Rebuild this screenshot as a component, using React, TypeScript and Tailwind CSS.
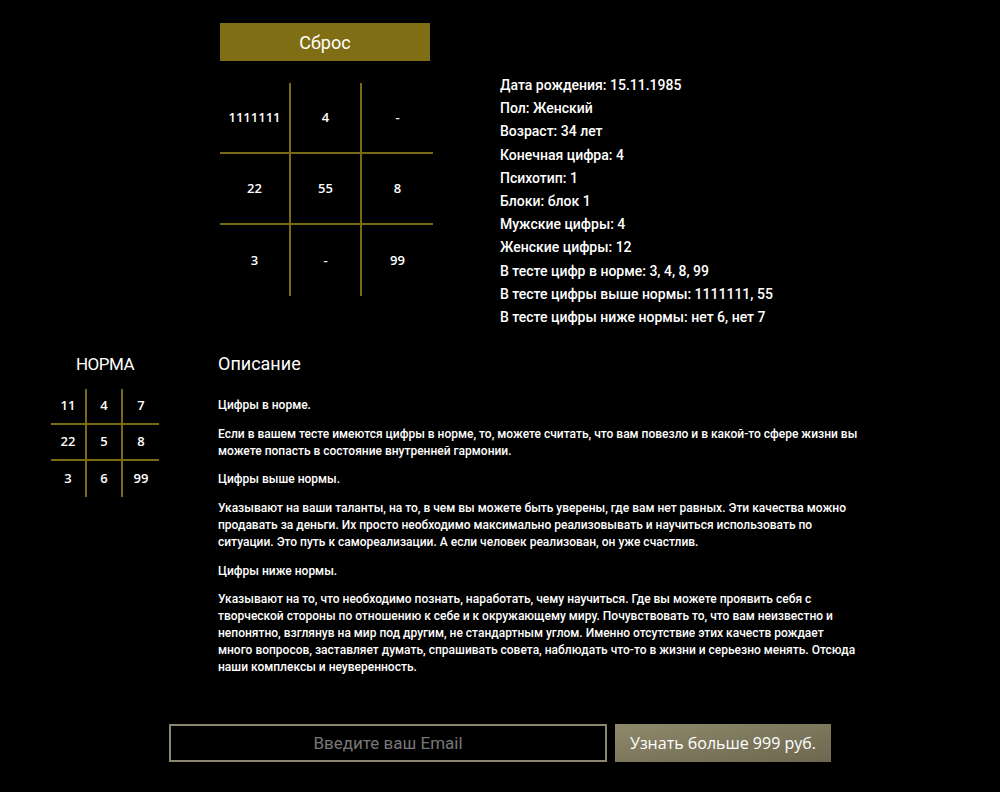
const mainGrid = [
  ["1111111", "4", "-"],
  ["22", "55", "8"],
  ["3", "-", "99"],
];

const normGrid = [
  ["11", "4", "7"],
  ["22", "5", "8"],
  ["3", "6", "99"],
];

const info = [
  "Дата рождения: 15.11.1985",
  "Пол: Женский",
  "Возраст: 34 лет",
  "Конечная цифра: 4",
  "Психотип: 1",
  "Блоки: блок 1",
  "Мужские цифры: 4",
  "Женские цифры: 12",
  "В тесте цифр в норме: 3, 4, 8, 99",
  "В тесте цифры выше нормы: 1111111, 55",
  "В тесте цифры ниже нормы: нет 6, нет 7",
];

const Matrix = ({ rows, cell }: { rows: string[][]; cell: string }) => (
  <div className="grid grid-cols-3">
    {rows.map((row, r) =>
      row.map((v, c) => (
        <div
          key={`${r}-${c}`}
          className={`${cell} flex items-center justify-center border-[#7a6a14] ${
            c < 2 ? "border-r-2" : ""
          } ${r < 2 ? "border-b-2" : ""}`}>
          {v}
        </div>
      ))
    )}
  </div>
);

const App = () => {
  return (
    <div className="min-h-[792px] w-full bg-black text-white font-['Roboto',sans-serif]">
      {/* top block */}
      <div className="flex pt-[23px] pl-[220px]">
        <div className="w-[213px]">
          <button className="w-[210px] h-[38px] bg-[#7f6e13] text-[18px]">Сброс</button>
          <div className="mt-[22px]">
            <Matrix
              rows={mainGrid}
              cell="h-[71px] text-[13px] font-semibold font-['Open_Sans',sans-serif]"
            />
          </div>
        </div>
        <div className="ml-[67px] pt-[51px] text-[14px] leading-[23.2px] font-medium">
          {info.map((line) => (
            <div key={line}>{line}</div>
          ))}
        </div>
      </div>

      {/* lower block */}
      <div className="flex mt-[23px] pl-[51px]">
        <div className="w-[108px]">
          <div className="text-center text-[17px] leading-[24px] tracking-[-0.5px]">НОРМА</div>
          <div className="mt-[13px]">
            <Matrix
              rows={normGrid}
              cell="h-[36px] text-[13px] font-semibold font-['Open_Sans',sans-serif]"
            />
          </div>
        </div>
        <div className="ml-[59px] w-[640px] text-[12px] leading-[17px] font-medium">
          <div className="text-[18px] leading-[24px] font-normal">Описание</div>
          <div className="mt-[21px] flex flex-col gap-[11.6px]">
            <p>Цифры в норме.</p>
            <p>
              Если в вашем тесте имеются цифры в норме, то, можете считать, что вам повезло и в
              какой-то сфере жизни вы можете попасть в состояние внутренней гармонии.
            </p>
            <p>Цифры выше нормы.</p>
            <p>
              Указывают на ваши таланты, на то, в чем вы можете быть уверены, где вам нет равных.
              Эти качества можно продавать за деньги. Их просто необходимо максимально
              реализовывать и научиться использовать по ситуации. Это путь к самореализации. А
              если человек реализован, он уже счастлив.
            </p>
            <p>Цифры ниже нормы.</p>
            <p>
              Указывают на то, что необходимо познать, наработать, чему научиться. Где вы можете
              проявить себя с творческой стороны по отношению к себе и к окружающему миру.
              Почувствовать то, что вам неизвестно и непонятно, взглянув на мир под другим, не
              стандартным углом. Именно отсутствие этих качеств рождает много вопросов, заставляет
              думать, спрашивать совета, наблюдать что-то в жизни и серьезно менять. Отсюда наши
              комплексы и неуверенность.
            </p>
          </div>
        </div>
      </div>

      {/* email form */}
      <div className="flex justify-center gap-[8px] mt-[48px] pb-[32px]">
        <input
          placeholder="Введите ваш Email"
          className="w-[438px] h-[38px] border-2 border-[#8a8670] bg-black text-center text-[17px] placeholder:text-[#777] outline-none"
        />
        <button className="w-[216px] h-[38px] bg-linear-to-br from-[#8f896c] to-[#6c674e] text-[16px] font-medium font-['Open_Sans',sans-serif]">
          Узнать больше 999 руб.
        </button>
      </div>
    </div>
  );
};

export default App;
